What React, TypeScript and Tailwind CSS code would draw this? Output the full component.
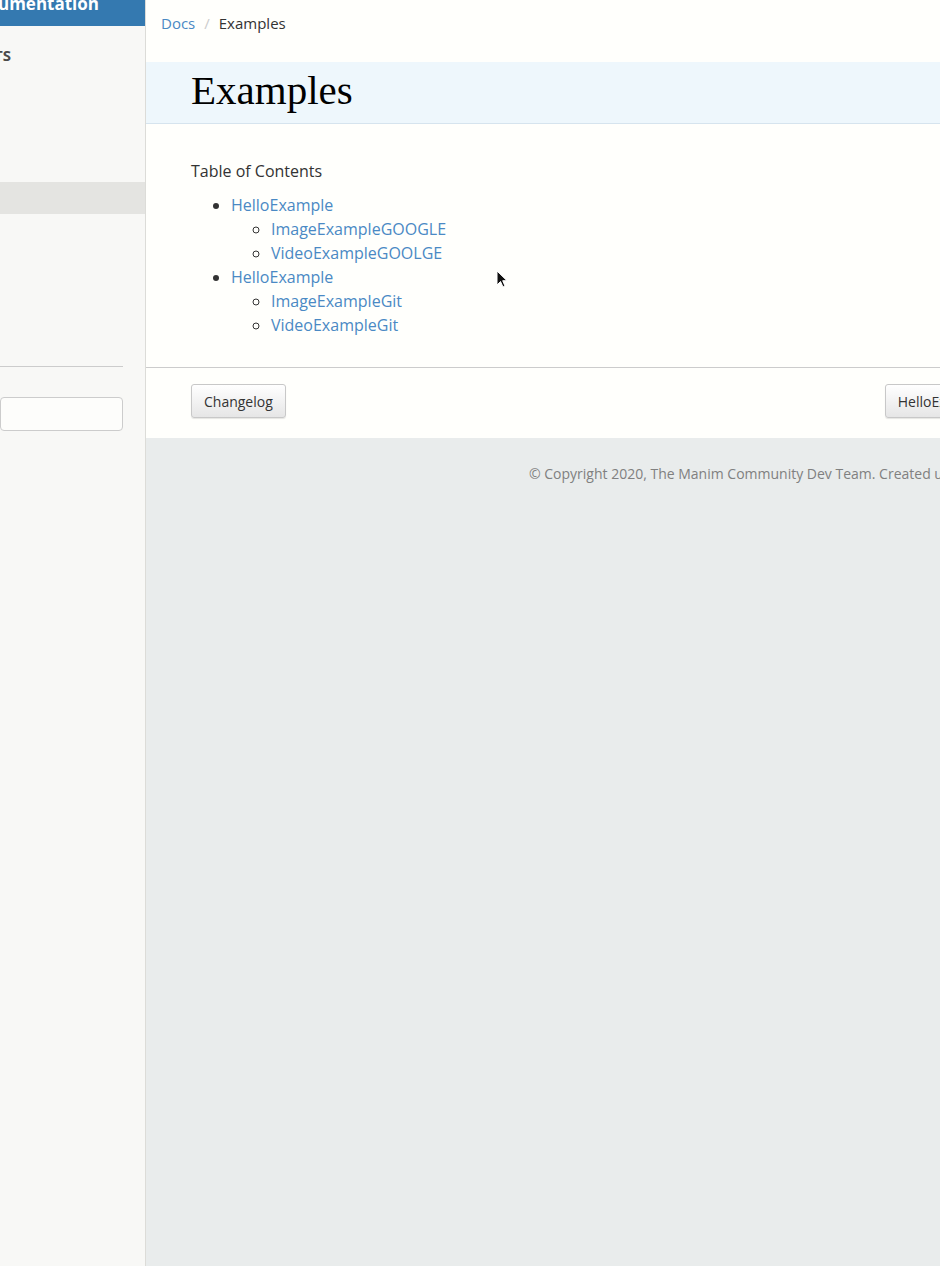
import React from "react";

const toc = [
  { title: "HelloExample", children: ["ImageExampleGOOGLE", "VideoExampleGOOLGE"] },
  { title: "HelloExample", children: ["ImageExampleGit", "VideoExampleGit"] },
];

const Sidebar = () => (
  <div className="w-[146px] shrink-0 h-full overflow-hidden bg-[#f8f8f6] border-r border-[#dcdcd8] flex flex-col">
    <div className="h-[26px] bg-[#3479b0] flex justify-end items-start pr-[46px] overflow-hidden">
      <span className="text-white font-bold text-[17px] leading-[20px] -mt-[6px] whitespace-nowrap">
        Manim Community Documentation
      </span>
    </div>
    <div className="flex justify-end pr-[134px] mt-[20px]">
      <span className="text-[15px] font-bold text-[#4a4a4a] uppercase whitespace-nowrap leading-[18px]">Contents</span>
    </div>
    <div className="h-[32px] bg-[#e4e4e1] mt-[118px]" />
    <div className="h-[152px]" />
    <div className="w-[123px] border-t border-[#cccccc]" />
    <div className="mt-[30px] w-[123px] h-[34px] rounded-[4px] border border-[#cccccc] bg-[#fdfdfb]" />
  </div>
);

const Cursor = () => (
  <svg className="absolute left-[496px] top-[270px]" width="12" height="19" viewBox="0 0 12 19">
    <path d="M1 1 L1 15 L4.5 11.5 L7 17 L9 16 L6.7 10.7 L11 10.7 Z" fill="#111" stroke="#fff" strokeWidth="1" />
  </svg>
);

export default function App() {
  return (
    <div className="relative w-[940px] h-[1266px] overflow-hidden flex font-['Open_Sans',sans-serif]">
      <Sidebar />
      <div className="flex-1 min-w-0 flex flex-col whitespace-nowrap">
        <div className="bg-[#fffffc]">
          <div className="h-[62px] flex items-center pl-[15px] pb-[16px] text-[15px]">
            <span className="text-[#4a89c4]">Docs</span>
            <span className="text-[#cccccc] mx-[9px]">/</span>
            <span className="text-[#333333]">Examples</span>
          </div>
          <div className="h-[62px] bg-[#eef7fc] border-b border-[#d6e4ee] pl-[45px] pb-[4px] flex items-center">
            <h1 className="font-['Liberation_Serif',serif] text-[41px] text-black leading-none">Examples</h1>
          </div>
          <div className="pl-[45px] pt-[35px] pb-[30px] text-[16px] leading-[24px]">
            <p className="text-[#333333] mb-[10px]">Table of Contents</p>
            <ul className="list-disc pl-[40px] marker:text-[#333333]">
              {toc.map((item, i) => (
                <li key={i}>
                  <span className="text-[#4a89c4]">{item.title}</span>
                  <ul className="list-[circle] pl-[40px]">
                    {item.children.map((c) => (
                      <li key={c}>
                        <span className="text-[#4a89c4]">{c}</span>
                      </li>
                    ))}
                  </ul>
                </li>
              ))}
            </ul>
          </div>
          <div className="border-t border-[#cccccc] pl-[45px] pt-[16px] pb-[20px] flex">
            <button className="h-[34px] px-[12px] text-[14px] text-[#333333] rounded-[3px] border border-[#c8c8c8] bg-gradient-to-b from-white to-[#e6e6e6] shadow-[0_1px_1px_rgba(0,0,0,0.1)]">
              Changelog
            </button>
            <button className="ml-[599px] h-[34px] px-[12px] text-[14px] text-[#333333] rounded-[3px] border border-[#c8c8c8] bg-gradient-to-b from-white to-[#e6e6e6] shadow-[0_1px_1px_rgba(0,0,0,0.1)]">
              HelloExample »
            </button>
          </div>
        </div>
        <div className="flex-1 bg-[#e9ecec] pt-[25px] pl-[383px] text-[14px] text-[#808080]">
          © Copyright 2020, The Manim Community Dev Team. Created using Sphinx 3.2.1.
        </div>
      </div>
      <Cursor />
    </div>
  );
}
